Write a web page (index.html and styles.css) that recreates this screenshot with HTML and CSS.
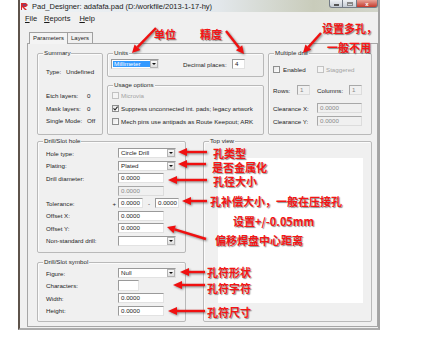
FILE: index.html
```html
<!DOCTYPE html>
<html lang="en">
<head>
    <meta charset="UTF-8">
    <title>Pad_Designer</title>
    <link rel="stylesheet" href="styles.css">
</head>
<body>
    <div class="window">
        <div class="titlebar">
            <svg class="app-icon" width="8" height="8" viewBox="0 0 8 8">
                <path d="M0 1 L5 1 L7 3 L5 5 L3 5 L6 8 L4 8 L1 5 L1 8 L0 8 Z" fill="#d8262c"/>
                <path d="M2 2.5 L4.5 2.5 L5 3 L4.5 3.6 L2 3.6 Z" fill="#2b5fb5"/>
            </svg>
            <span class="title">Pad_Designer: adafafa.pad (D:/workfile/2013-1-17-hy)</span>
            <div class="caption">
                <span class="cbtn min"><i></i></span>
                <span class="cbtn max"><i></i></span>
                <span class="cbtn close">x</span>
            </div>
        </div>

        <div class="menubar">
            <span><u>F</u>ile</span>
            <span><u>R</u>eports</span>
            <span><u>H</u>elp</span>
        </div>

        <div class="tabs">
            <span class="tab active">Parameters</span>
            <span class="tab">Layers</span>
        </div>

        <div class="panel">
            <div class="row-top">
                <div class="group summary">
                    <span class="legend">Summary</span>
                    <div class="kv kv-type"><span class="k">Type:</span><span>Undefined</span></div>
                    <div class="kv kv-first"><span class="k">Etch layers:</span><span>0</span></div>
                    <div class="kv"><span class="k">Mask layers:</span><span>0</span></div>
                    <div class="kv"><span class="k">Single Mode:</span><span>Off</span></div>
                </div>

                <div class="col-mid">
                    <div class="group units">
                        <span class="legend">Units</span>
                        <div class="units-row">
                            <div class="combo units-combo"><span class="val sel">Millimeter</span><span class="drop"></span></div>
                            <span class="dp-label">Decimal places:</span>
                            <span class="field dp">4</span>
                        </div>
                    </div>
                    <div class="group usage">
                        <span class="legend">Usage options</span>
                        <div class="usage-body">
                            <div class="check disabled"><span class="box"></span>Microvia</div>
                            <div class="check">
                                <span class="box">
                                    <svg width="5" height="5" viewBox="0 0 5 5"><path d="M0.5 2.4 L2 4 L4.6 0.6" fill="none" stroke="#222" stroke-width="1.1"/></svg>
                                </span>Suppress unconnected int. pads; legacy artwork
                            </div>
                            <div class="check"><span class="box"></span>Mech pins use antipads as Route Keepout; ARK</div>
                        </div>
                    </div>
                </div>

                <div class="group multi">
                    <span class="legend">Multiple drill</span>
                    <div class="multi-body">
                        <div class="line line-enabled">
                            <div class="check enabled-check"><span class="box"></span>Enabled</div>
                            <div class="check disabled"><span class="box"></span>Staggered</div>
                        </div>
                        <div class="line line-rows">
                            <span class="lbl w24">Rows:</span><span class="field off tiny">1</span>
                            <span class="lbl w32 cols">Columns:</span><span class="field off tiny">1</span>
                        </div>
                        <div class="line line-cx">
                            <span class="lbl w44">Clearance X:</span><span class="field off mid">0.0000</span>
                        </div>
                        <div class="line line-cy">
                            <span class="lbl w44">Clearance Y:</span><span class="field off mid">0.0000</span>
                        </div>
                    </div>
                </div>
            </div>

            <div class="row-bottom">
                <div class="col-left">
                    <div class="group hole">
                        <span class="legend">Drill/Slot hole</span>
                        <div class="form hole-form">
                            <div class="frow"><span class="flabel">Hole type:</span><div class="combo"><span class="val">Circle Drill</span><span class="drop"></span></div></div>
                            <div class="frow"><span class="flabel">Plating:</span><div class="combo"><span class="val">Plated</span><span class="drop"></span></div></div>
                            <div class="frow"><span class="flabel">Drill diameter:</span><span class="field">0.0000</span></div>
                            <div class="frow"><span class="flabel"></span><span class="field off">0.0000</span></div>
                            <div class="frow"><span class="flabel tol">Tolerance:<span>+</span></span><span class="field short">0.0000</span><span class="minus">-</span><span class="field short">0.0000</span></div>
                            <div class="frow"><span class="flabel">Offset X:</span><span class="field">0.0000</span></div>
                            <div class="frow"><span class="flabel">Offset Y:</span><span class="field">0.0000</span></div>
                            <div class="frow"><span class="flabel">Non-standard drill:</span><div class="combo"><span class="val"></span><span class="drop"></span></div></div>
                        </div>
                    </div>
                    <div class="group symbol">
                        <span class="legend">Drill/Slot symbol</span>
                        <div class="form symbol-form">
                            <div class="frow"><span class="flabel">Figure:</span><div class="combo"><span class="val">Null</span><span class="drop"></span></div></div>
                            <div class="frow"><span class="flabel">Characters:</span><span class="field chars"></span></div>
                            <div class="frow"><span class="flabel">Width:</span><span class="field">0.0000</span></div>
                            <div class="frow"><span class="flabel">Height:</span><span class="field">0.0000</span></div>
                        </div>
                    </div>
                </div>

                <div class="group topview">
                    <span class="legend">Top view</span>
                    <div class="canvas"></div>
                </div>
            </div>
        </div>
    </div>

    <!-- red notes drawn over the dialog -->
    <div class="notes">
        <svg class="arrows" width="427" height="344" viewBox="0 0 427 344">
            <g stroke="#f01010" stroke-width="2.4" fill="none">
                <line x1="156" y1="28" x2="137.5" y2="47.2"/>
                <line x1="226" y1="31" x2="239.1" y2="47.7"/>
                <line x1="321" y1="33" x2="308.4" y2="47.1"/>
                <line x1="186" y1="152" x2="207" y2="152"/>
                <line x1="186" y1="164" x2="206" y2="164"/>
                <line x1="176" y1="180" x2="207" y2="180"/>
                <line x1="190" y1="201" x2="207" y2="201"/>
                <line x1="174.6" y1="229.4" x2="206" y2="239"/>
                <line x1="188" y1="272" x2="205" y2="272"/>
                <line x1="181" y1="285" x2="205" y2="285"/>
                <line x1="176" y1="311" x2="205" y2="311"/>
            </g>
            <g fill="#f01010">
                <polygon points="132,53 140.4,50 134.6,44.5"/>
                <polygon points="244,54 235.9,50.2 242.2,45.2"/>
                <polygon points="303,53 311.3,49.7 305.4,44.4"/>
                <polygon points="178,152 187,148 187,156"/>
                <polygon points="178,164 187,160 187,168"/>
                <polygon points="168,180 177,176 177,184"/>
                <polygon points="182,201 191,197 191,205"/>
                <polygon points="167,227 175.8,225.5 173.5,233.2"/>
                <polygon points="180,272 189,268 189,276"/>
                <polygon points="173,285 182,281 182,289"/>
                <polygon points="168,311 177,307 177,315"/>
            </g>
        </svg>
        <span class="note n-unit">单位</span>
        <span class="note n-prec">精度</span>
        <span class="note n-multi1">设置多孔，</span>
        <span class="note n-multi2">一般不用</span>
        <span class="note n-type">孔类型</span>
        <span class="note n-plate">是否金属化</span>
        <span class="note n-dia">孔径大小</span>
        <span class="note n-tol">孔补偿大小，一般在压接孔</span>
        <span class="note n-tol2">设置+/-0.05mm</span>
        <span class="note n-off">偏移焊盘中心距离</span>
        <span class="note n-fig">孔符形状</span>
        <span class="note n-chr">孔符字符</span>
        <span class="note n-size">孔符尺寸</span>
    </div>
</body>
</html>
```

FILE: styles.css
```css
* {
    box-sizing: border-box;
}

body {
    margin: 0;
    width: 427px;
    height: 344px;
    overflow: hidden;
    position: relative;
    background-color: #ffffff;
    font-family: "Liberation Sans", Arial, sans-serif;
    font-size: 6.2px;
    color: #1e1e1e;
}

.window {
    margin-left: 18px;
    width: 362px;
    height: 330px;
    background-color: #f0f0f0;
    border-left: 2px solid #5e534b;
    border-right: 2px solid #a3a3a3;
    border-bottom: 2px solid #acacac;
    display: flex;
    flex-direction: column;
}

/* title bar */
.titlebar {
    height: 12px;
    display: flex;
    align-items: center;
    background: linear-gradient(90deg, #eef2f5 0%, #e3e8ec 55%, #c9ccbb 82%, #d2d5ca 100%);
}

.app-icon {
    margin-left: 1px;
}

.title {
    margin-left: 3px;
    font-size: 7.5px;
    color: #1a1a1a;
    white-space: nowrap;
}

.caption {
    margin-left: auto;
    align-self: flex-start;
    display: flex;
}

.cbtn {
    width: 14px;
    height: 8px;
    border: 1px solid #737b85;
    border-top: none;
    background: linear-gradient(#eef1f4, #c5ccd4);
    display: flex;
    align-items: center;
    justify-content: center;
}

.cbtn.min {
    border-radius: 0 0 0 3px;
}

.cbtn.min i {
    width: 5px;
    height: 2px;
    margin-top: 3px;
    background-color: #fff;
    border: 1px solid #555;
}

.cbtn.max {
    border-left: none;
}

.cbtn.max i {
    width: 6px;
    height: 4px;
    border: 1px solid #888;
    border-top-width: 2px;
}

.cbtn.close {
    width: 21px;
    border-left: none;
    border-radius: 0 0 3px 0;
    background: linear-gradient(#e8a397, #c43a2d);
    color: #fff;
    font-size: 6px;
    font-weight: bold;
    line-height: 8px;
}

/* menu */
.menubar {
    height: 13px;
    display: flex;
    align-items: center;
    gap: 7px;
    padding-left: 5px;
    font-size: 7.5px;
    color: #1a1a1a;
}

.menubar span:nth-child(2) {
    margin-right: 2px;
}

/* tabs */
.tabs {
    height: 18px;
    display: flex;
    align-items: flex-end;
    padding-left: 9px;
}

.tab {
    height: 11px;
    padding: 0 3px;
    border: 1px solid #a0a0a0;
    border-bottom: none;
    font-size: 6px;
    line-height: 10px;
    background-color: #f0f0f0;
}

.tab.active {
    height: 12px;
    margin-bottom: -1px;
    background-color: #f4f4f4;
    position: relative;
    z-index: 1;
}

.tab + .tab {
    border-left: none;
}

.panel {
    margin-left: 7px;
    width: 351px;
    height: 284px;
    border: 1px solid #a6a6a6;
    padding: 9px 5px 0 9px;
    display: flex;
    flex-direction: column;
    gap: 6px;
}

/* group boxes */
.group {
    border: 1px solid #b9b9b9;
    border-radius: 2px;
    box-shadow: inset 1px 1px 0 #fbfbfb;
}

.legend {
    display: block;
    width: fit-content;
    height: 8px;
    line-height: 8px;
    margin: -5px 0 0 5px;
    padding: 0 1px;
    background-color: #f0f0f0;
    color: #2a2a2a;
}

.row-top {
    display: flex;
    gap: 4px;
    height: 82px;
}

.summary {
    width: 66px;
}

.col-mid {
    width: 157px;
    display: flex;
    flex-direction: column;
    gap: 8px;
}

.units {
    height: 24px;
}

.usage {
    height: 50px;
}

.multi {
    width: 104px;
}

.row-bottom {
    display: flex;
    gap: 17px;
    height: 181px;
}

.col-left {
    width: 149px;
    display: flex;
    flex-direction: column;
    gap: 9px;
}

.hole {
    height: 112px;
}

.symbol {
    height: 60px;
}

.topview {
    width: 169px;
}

.canvas {
    margin: 13px 0 0 14px;
    width: 145px;
    height: 145px;
    background-color: #ffffff;
}

/* summary */
.kv {
    display: flex;
    align-items: center;
    height: 12.5px;
    padding-left: 8px;
    white-space: nowrap;
}

.kv .k {
    width: 41px;
}

.kv-type {
    margin-top: 8px;
}

.kv-type .k {
    width: 20px;
}

.kv-first {
    margin-top: 12px;
}

/* controls */
.field {
    display: block;
    width: 46px;
    height: 10px;
    padding-left: 2px;
    line-height: 8px;
    background-color: #ffffff;
    border: 1px solid;
    border-color: #9a9a9a #e2e2e2 #e2e2e2 #9a9a9a;
    white-space: nowrap;
}

.field.off {
    background-color: #f0f0f0;
    color: #8a8a8a;
    border-color: #a8a8a8 #dcdcdc #dcdcdc #a8a8a8;
}

.combo {
    width: 58px;
    height: 10px;
    display: flex;
    background-color: #ffffff;
    border: 1px solid;
    border-color: #9a9a9a #e2e2e2 #e2e2e2 #9a9a9a;
}

.combo .val {
    flex: 1;
    padding-left: 2px;
    line-height: 8px;
    white-space: nowrap;
}

.combo .drop {
    width: 8px;
    border: 1px solid #b4b4b4;
    background: linear-gradient(#fafafa, #dedede);
    display: flex;
    align-items: center;
    justify-content: center;
}

.combo .drop::after {
    content: "";
    border-left: 2px solid transparent;
    border-right: 2px solid transparent;
    border-top: 2px solid #111;
}

.check {
    display: flex;
    align-items: center;
    gap: 2px;
    white-space: nowrap;
}

.check .box {
    width: 7px;
    height: 7px;
    border: 1px solid #8e8f8f;
    background: linear-gradient(135deg, #e6e6e6, #ffffff);
    display: flex;
    align-items: center;
    justify-content: center;
}

.check.disabled {
    color: #a3a3a3;
}

.check.disabled .box {
    border-color: #c2c2c2;
    background: #f4f4f4;
}

/* units */
.units-row {
    display: flex;
    align-items: center;
    height: 10px;
    margin-top: 2px;
    padding-left: 3px;
}

.units-combo {
    width: 48px;
}

.combo .val.sel {
    margin: 1px 0 1px 1px;
    padding-left: 1px;
    line-height: 6px;
    background-color: #3399ff;
    color: #ffffff;
}

.dp-label {
    margin-left: 24px;
    width: 49px;
    white-space: nowrap;
}

.field.dp {
    width: 13px;
    height: 10px;
}

/* usage */
.usage-body {
    padding-left: 4px;
}

.usage-body .check {
    height: 13px;
}

/* multiple drill */
.multi-body {
    padding-left: 4px;
}

.line {
    display: flex;
    align-items: center;
    height: 10px;
    white-space: nowrap;
}

.line-enabled {
    margin-top: 7px;
}

.enabled-check {
    width: 44px;
    gap: 3px;
}

.line-rows {
    margin-top: 11px;
}

.line-cx {
    margin-top: 8px;
}

.line-cy {
    margin-top: 3px;
}

.w24 {
    width: 24px;
}

.w32 {
    width: 32px;
}

.w44 {
    width: 44px;
}

.cols {
    margin-left: 7px;
}

.field.tiny {
    width: 13px;
}

.field.mid {
    width: 45px;
}

/* forms in the lower groups */
.form {
    display: flex;
    flex-direction: column;
    gap: 2.57px;
    padding-left: 8px;
}

.hole-form {
    padding-top: 3px;
}

.symbol-form {
    padding-top: 2px;
}

.frow {
    display: flex;
    align-items: center;
    height: 10px;
    white-space: nowrap;
}

.flabel {
    width: 72px;
}

.flabel.tol {
    display: flex;
    justify-content: space-between;
    padding-right: 2px;
}

.field.short {
    width: 25px;
}

.field.short:last-child {
    width: 24px;
}

.minus {
    width: 12px;
    text-align: center;
}

.field.chars {
    width: 21px;
    height: 11px;
}

/* annotations */
.notes {
    position: absolute;
    left: 0;
    top: 0;
    width: 427px;
    height: 344px;
    pointer-events: none;
}

.arrows {
    position: absolute;
    left: 0;
    top: 0;
    filter: drop-shadow(1px 1px 1px rgba(0, 0, 0, 0.45));
}

.note {
    position: absolute;
    font-family: "Noto Sans CJK SC", "Liberation Sans", sans-serif;
    font-size: 11px;
    font-weight: bold;
    line-height: 11px;
    color: #f51515;
    white-space: nowrap;
    text-shadow: 1px 1px 1px rgba(0, 0, 0, 0.45);
}

.n-unit { left: 154px; top: 28.5px; }
.n-prec { left: 200px; top: 28.5px; }
.n-multi1 { left: 322px; top: 22.5px; }
.n-multi2 { left: 327px; top: 42px; }
.n-type { left: 213px; top: 147.5px; }
.n-plate { left: 212px; top: 161.5px; }
.n-dia { left: 213px; top: 175.5px; }
.n-tol { left: 210px; top: 195.5px; }
.n-tol2 { left: 233px; top: 216px; }
.n-off { left: 215px; top: 234.5px; }
.n-fig { left: 207px; top: 266.5px; }
.n-chr { left: 207px; top: 282.5px; }
.n-size { left: 207px; top: 306.5px; }
```
